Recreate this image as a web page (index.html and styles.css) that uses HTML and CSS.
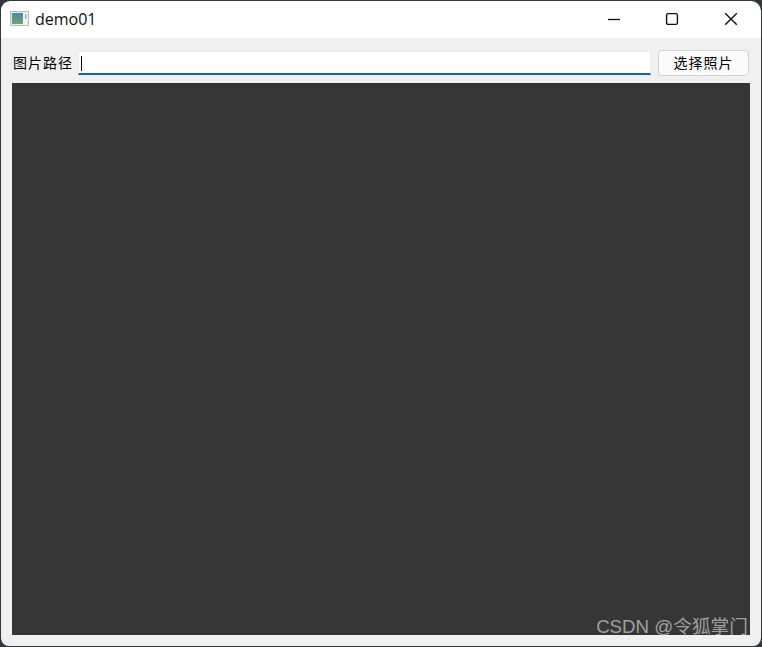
FILE: index.html
```html
<!DOCTYPE html>
<html lang="zh">
<head>
<meta charset="utf-8">
<title>demo01</title>
<link rel="stylesheet" href="styles.css">
</head>
<body>
<div class="window">
  <header class="titlebar">
    <svg class="app-icon" width="19" height="15" viewBox="0 0 19 15">
      <defs><linearGradient id="g" x1="0" y1="0" x2="0" y2="1"><stop offset="0" stop-color="#4a8aa6"/><stop offset="1" stop-color="#6fa56c"/></linearGradient></defs>
      <rect x="0.5" y="0.5" width="18" height="14" fill="#ececec" stroke="#bdbdbd"/>
      <rect x="2" y="2" width="11" height="11" fill="url(#g)"/>
      <rect x="13" y="2" width="4" height="11" fill="#f6f6f6"/>
      <rect x="15" y="3" width="1.5" height="5" fill="#7fb8c4"/>
    </svg>
    <span class="app-title">demo01</span>
    <div class="controls">
      <button class="ctl" aria-label="最小化"><svg width="14" height="14" viewBox="0 0 14 14"><path d="M1 7.5H13" stroke="#111" fill="none" stroke-width="1.3"/></svg></button>
      <button class="ctl" aria-label="最大化"><svg width="14" height="14" viewBox="0 0 14 14"><rect x="1.6" y="1.6" width="10.8" height="10.8" rx="1.6" stroke="#111" fill="none" stroke-width="1.4"/></svg></button>
      <button class="ctl" aria-label="关闭"><svg width="14" height="14" viewBox="0 0 14 14"><path d="M1.2 1.2L12.8 12.8M12.8 1.2L1.2 12.8" stroke="#111" fill="none" stroke-width="1.4"/></svg></button>
    </div>
  </header>
  <main class="content">
    <div class="toolbar">
      <label class="path-label">图片路径</label>
      <div class="path-input"><span class="caret"></span></div>
      <button class="pick">选择照片</button>
    </div>
    <div class="canvas"><span class="watermark">CSDN @令狐掌门</span></div>
  </main>
</div>
</body>
</html>
```
FILE: styles.css
```css
html, body { margin: 0; height: 100%; }
body { background: #33383e; overflow: hidden; font-family: "Noto Sans CJK SC", "Liberation Sans", sans-serif; }
.window { box-sizing: border-box; width: 762px; height: 647px; padding: 1px 1px 1px; display: flex; flex-direction: column; }
.titlebar { height: 37px; flex: none; background: #fff; border-radius: 9px 10px 0 0; display: flex; align-items: center; padding-left: 9px; }
.app-icon { flex: none; margin-top: -2px; }
.app-title { margin-left: 6px; margin-top: -1px; font: 16px "Open Sans", "Liberation Sans", sans-serif; color: #111; }
.controls { margin-left: auto; display: flex; margin-right: 1px; margin-top: -1px; }
.ctl { width: 58.5px; height: 37px; padding: 0; border: 0; background: none; display: flex; align-items: center; justify-content: center; }
.content { flex: 1; background: #f0f0f0; border-radius: 0 0 8px 8px; display: flex; flex-direction: column; padding: 11px 11px 11px; min-height: 0; }
.toolbar { display: flex; align-items: center; height: 28px; flex: none; }
.path-label { width: 66px; flex: none; padding-left: 1px; margin-top: -2px; box-sizing: border-box; font-size: 14px; letter-spacing: 1px; color: #000; white-space: nowrap; }
.path-input { width: 573px; height: 24px; box-sizing: border-box; background: #fff; border: 1px solid #ebebeb; border-bottom: 2px solid #0067c0; padding: 4px 0 0 2px; flex: none; }
.caret { display: block; width: 1px; height: 15px; background: #000; }
.pick { margin-left: 7px; width: 91px; height: 26px; padding: 0 0 2px; box-sizing: border-box; border: 1px solid #d2d2d2; border-radius: 4px; background: #fbfbfb; font: inherit; font-size: 14px; letter-spacing: 1px; color: #000; flex: none; }
.canvas { margin-top: 6px; flex: 1; background: #363636; position: relative; width: 738px; }
.watermark { position: absolute; right: 2px; bottom: -3px; font: 18.7px "Liberation Sans", "Noto Sans CJK SC", sans-serif; color: #a0a0a0; white-space: nowrap; }
```
